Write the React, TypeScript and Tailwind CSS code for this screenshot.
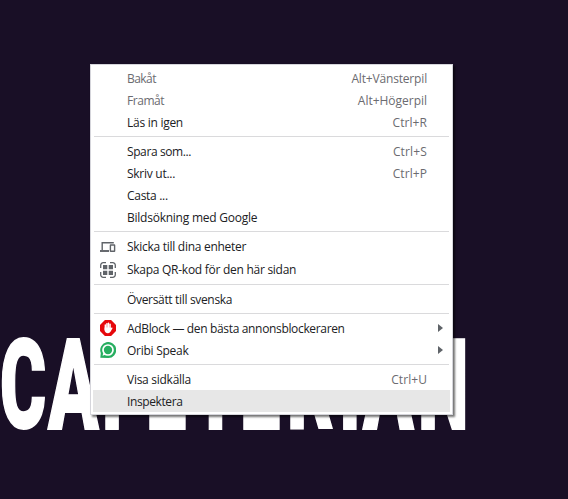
import type { ReactNode } from "react";

type Item = {
  label: string;
  spacing: string;
  shortcut?: string;
  shortcutSpacing?: string;
  icon?: ReactNode;
  disabled?: boolean;
  submenu?: boolean;
  active?: boolean;
  tall?: boolean;
};

const DevicesIcon = () => (
  <svg width="16" height="16" viewBox="0 0 16 16" fill="none" stroke="#5f6368" strokeWidth="1.4">
    <path d="M2.2 11V3.7h11.6" />
    <path d="M0 12h9" strokeWidth="1.9" />
    <rect x="10.4" y="6" width="4.2" height="6.2" rx="0.3" />
  </svg>
);

const QrIcon = () => (
  <svg width="16" height="16" viewBox="0 0 16 16" fill="none" stroke="#5f6368" strokeWidth="1.3">
    <path d="M0.7 6V3.2a2.5 2.5 0 0 1 2.5-2.5H6M10 .7h2.8a2.5 2.5 0 0 1 2.5 2.5V6M15.3 10v2.8a2.5 2.5 0 0 1-2.5 2.5H10M6 15.3H3.2a2.5 2.5 0 0 1-2.5-2.5V10" />
    <path fill="#5f6368" stroke="none" d="M3 3h4.3v4.3H3zM8.7 3H13v4.3H8.7zM3 8.7h4.3V13H3zM8.7 8.7H13V13H8.7z" />
  </svg>
);

const AdBlockIcon = () => (
  <svg width="16" height="16" viewBox="0 0 16 16">
    <path
      fill="#e6080c"
      stroke="#e6080c"
      strokeWidth="1.6"
      strokeLinejoin="round"
      d="M5.2 .8h5.6L15.2 5.2v5.6L10.8 15.2H5.2L.8 10.8V5.2z"
    />
    <g stroke="#fff" strokeWidth="1.4" strokeLinecap="round" fill="none">
      <path d="M5.3 5v5M6.9 3.6v5M8.5 3.3v5M10.1 4.3v5M11.8 8.2l-1.6 2.6" />
    </g>
    <path fill="#fff" d="M4.6 7.5h6.2v2.6c0 2-1.2 3.2-2.9 3.2-2 0-3.3-1.2-3.3-3.2z" />
  </svg>
);

const OribiIcon = () => (
  <svg width="16" height="16" viewBox="0 0 16 16">
    <path fill="#27ae60" d="M.3 15.8L.8 11A8 8 0 1 1 8 16z" />
    <circle cx="8" cy="8" r="5" fill="#27ae60" stroke="#fff" strokeWidth="1.7" />
    <path fill="#fff" d="M2.5 13.7l1-3 2 2z" />
  </svg>
);

const groups: Item[][] = [
  [
    { label: "Bakåt", spacing: "tracking-[-0.55px]", shortcut: "Alt+Vänsterpil", shortcutSpacing: "tracking-[-0.17px]", disabled: true },
    { label: "Framåt", spacing: "tracking-[-0.45px]", shortcut: "Alt+Högerpil", shortcutSpacing: "tracking-[-0.02px]", disabled: true },
    { label: "Läs in igen", spacing: "tracking-[-0.27px]", shortcut: "Ctrl+R", shortcutSpacing: "tracking-[0.07px]" },
  ],
  [
    { label: "Spara som...", spacing: "tracking-[-0.4px]", shortcut: "Ctrl+S", shortcutSpacing: "tracking-[0.15px]" },
    { label: "Skriv ut...", spacing: "tracking-[-0.27px]", shortcut: "Ctrl+P", shortcutSpacing: "tracking-[0.07px]" },
    { label: "Casta ...", spacing: "tracking-[-0.3px]" },
    { label: "Bildsökning med Google", spacing: "tracking-[-0.24px]" },
  ],
  [
    { label: "Skicka till dina enheter", spacing: "tracking-[-0.28px]", icon: <DevicesIcon />, tall: true },
    { label: "Skapa QR-kod för den här sidan", spacing: "tracking-[-0.27px]", icon: <QrIcon />, tall: true },
  ],
  [{ label: "Översätt till svenska", spacing: "tracking-[-0.33px]" }],
  [
    { label: "AdBlock — den bästa annonsblockeraren", spacing: "tracking-[-0.34px]", icon: <AdBlockIcon />, submenu: true },
    { label: "Oribi Speak", spacing: "tracking-[-0.27px]", icon: <OribiIcon />, submenu: true },
  ],
  [
    { label: "Visa sidkälla", spacing: "tracking-[-0.27px]", shortcut: "Ctrl+U", shortcutSpacing: "tracking-[0.07px]" },
    { label: "Inspektera", spacing: "tracking-[-0.4px]", active: true },
  ],
];

// Each letter has its own slot width and horizontal condensing.
const letters = [
  { ch: "C", box: "w-[48px]", squeeze: "scale-x-[0.56] scale-y-[0.98]" },
  { ch: "A", box: "w-[53.5px]", squeeze: "scale-x-[0.59]" },
  { ch: "F", box: "w-[44.5px]", squeeze: "scale-x-[0.57]" },
  { ch: "E", box: "w-[46.5px]", squeeze: "scale-x-[0.57]" },
  { ch: "T", box: "w-[47.5px]", squeeze: "scale-x-[0.57]" },
  { ch: "E", box: "w-[47px]", squeeze: "scale-x-[0.57]" },
  { ch: "R", box: "w-[52px]", squeeze: "scale-x-[0.57]" },
  { ch: "I", box: "w-[24px]", squeeze: "scale-x-[0.57]" },
  { ch: "A", box: "w-[54.5px]", squeeze: "scale-x-[0.59]" },
  { ch: "N", box: "w-[52px]", squeeze: "scale-x-[0.57]" },
];

function Row({ item }: { item: Item }) {
  return (
    <div
      className={`flex items-center pl-[7px] ${item.tall ? "h-[23px]" : "h-[22px]"} ${
        item.active ? "bg-[#e7e7e7]" : ""
      } ${item.disabled ? "text-[#6b6b70]" : "text-[#202124]"}`}
    >
      <span className="w-[27px] shrink-0">{item.icon}</span>
      <span className={`grow pt-px whitespace-nowrap ${item.spacing}`}>{item.label}</span>
      {item.shortcut && (
        <span className={`pt-px pr-[23px] whitespace-nowrap text-[#6b6b70] ${item.shortcutSpacing}`}>
          {item.shortcut}
        </span>
      )}
      {item.submenu && (
        <svg width="5" height="8" viewBox="0 0 5 8" className="mr-[7px]">
          <path fill="#5f6368" d="M0 0l5 4-5 4z" />
        </svg>
      )}
    </div>
  );
}

export default function App() {
  return (
    <div className="relative h-[499px] w-[568px] overflow-hidden bg-[#190f26] font-['Open_Sans','Noto_Sans',sans-serif] text-[12px] leading-[16px]">
      <h1 className="flex pt-[341px] font-['Roboto',sans-serif] text-[126px] leading-[91px] font-black text-white [-webkit-text-stroke:2px_white]">
        {letters.map((l, i) => (
          <span key={i} className={`block shrink-0 ${l.box}`}>
            <span className={`inline-block origin-left ${l.squeeze}`}>{l.ch}</span>
          </span>
        ))}
      </h1>
      <div className="absolute top-[64px] left-[90px] h-[351px] w-[363px] border border-[#d5d5db] bg-white px-[2px] py-[2px] shadow-[2px_2px_2px_rgba(0,0,0,0.55)]">
        {groups.map((group, g) => (
          <div key={g}>
            {g > 0 && <div className="mx-px my-[3px] h-px bg-[#dadadc]" />}
            {group.map((item) => (
              <Row key={item.label} item={item} />
            ))}
          </div>
        ))}
      </div>
    </div>
  );
}
